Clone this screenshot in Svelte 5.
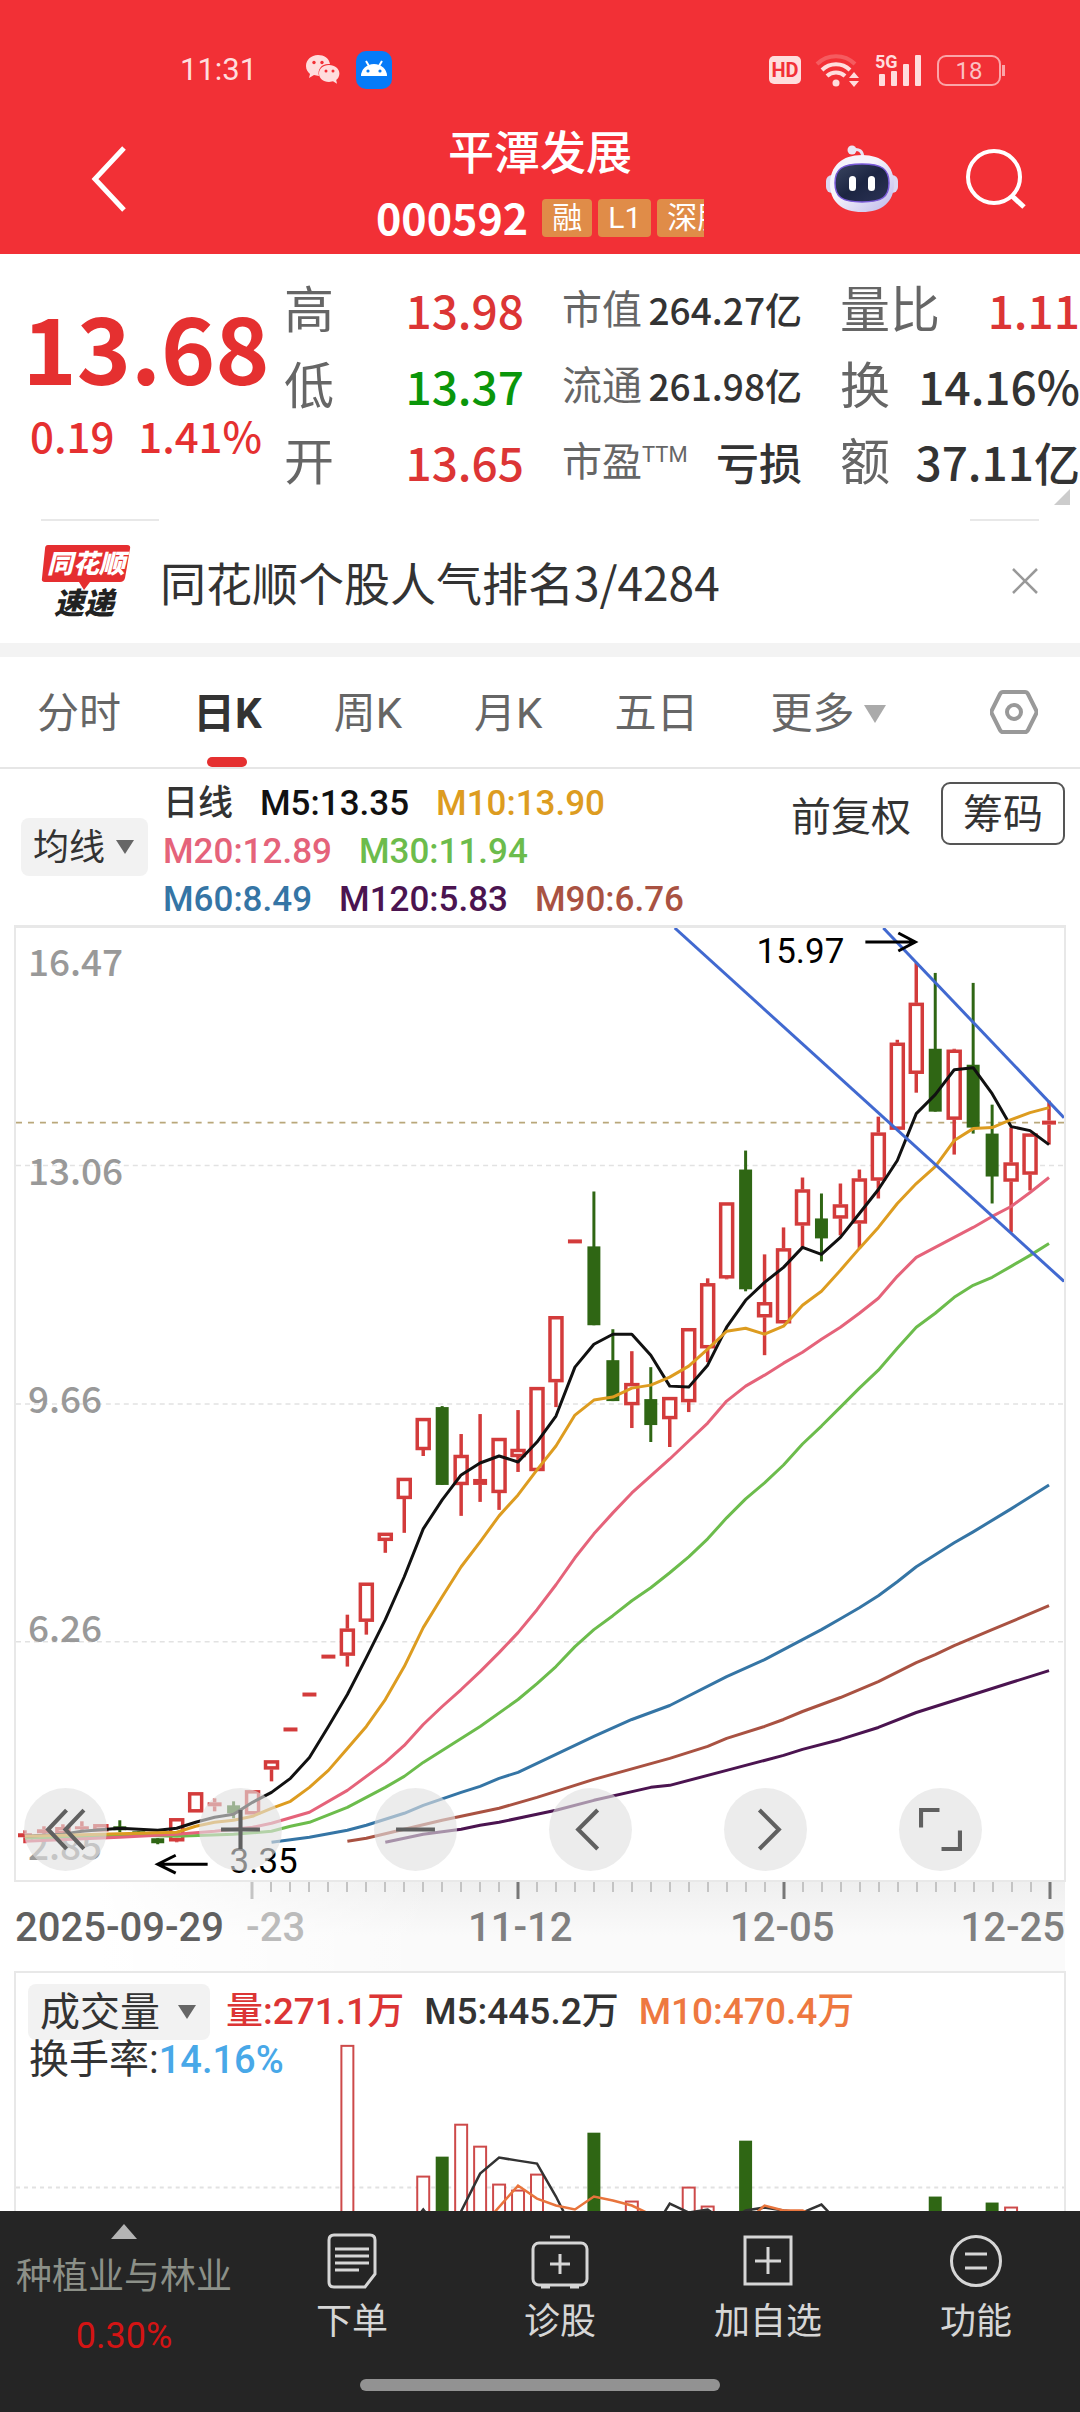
<script>

  // Quote figures, one array per column
  const quotes = [
    [
      { label: '高', value: '13.98', tone: 'up' },
      { label: '低', value: '13.37', tone: 'down' },
      { label: '开', value: '13.65', tone: 'up' }
    ],
    [
      { label: '市值', value: '264.27亿', size: 'small' },
      { label: '流通', value: '261.98亿', size: 'small' },
      { label: '市盈', sup: 'TTM', value: '亏损', size: 'medium' }
    ],
    [
      { label: '量比', value: '1.11', tone: 'up' },
      { label: '换', value: '14.16%' },
      { label: '额', value: '37.11亿' }
    ]
  ];

  const tabs = ['分时', '日K', '周K', '月K', '五日'];
  let activeTab = '日K';

  const legend = [
    [['日线', '#333'], ['M5:13.35', '#111'], ['M10:13.90', '#dd9c20']],
    [['M20:12.89', '#e5637a'], ['M30:11.94', '#6cbc4c']],
    [['M60:8.49', '#3575a5'], ['M120:5.83', '#4b1450'], ['M90:6.76', '#a95242']]
  ];

  // Horizontal position of the trading day with index i
  const x = (i) => 9 + 19 * i;

  // Candles: [high, body top, body bottom, low, green]
  const candles = [
    [904, 907, 911, 917], [900, 903, 907, 910], [898, 901, 908, 909], [895, 900, 903, 906],
    [898, 898, 905, 905], [894, 900, 904, 906, 1], [905, 905, 908, 908, 1], [912, 912, 917, 918, 1],
    [892, 892, 915, 916], [866, 866, 886, 886], [872, 876, 880, 885], [875, 879, 887, 892, 1],
    [864, 864, 888, 888], [834, 834, 843, 855], [801, 801, 805, 805], [766, 766, 770, 770],
    [728, 728, 732, 732], [688, 702, 729, 740], [656, 656, 695, 708], [606, 606, 614, 626],
    [551, 551, 572, 606], [491, 491, 523, 529], [479, 480, 558, 558, 1], [507, 528, 558, 589],
    [487, 552, 558, 575], [511, 511, 566, 583], [483, 522, 530, 545], [460, 460, 544, 544],
    [389, 389, 455, 480], [312, 312, 316, 316], [264, 319, 398, 398, 1], [402, 433, 474, 474, 1],
    [424, 456, 478, 501], [440, 472, 498, 515, 1], [470, 470, 492, 520], [401, 401, 475, 485],
    [351, 356, 421, 435], [275, 275, 351, 352], [223, 242, 362, 364, 1], [327, 375, 390, 428],
    [300, 321, 396, 396], [250, 262, 298, 320], [266, 291, 311, 334, 1], [256, 277, 291, 308],
    [242, 251, 296, 321], [189, 205, 253, 271], [112, 115, 202, 202], [35, 75, 146, 165],
    [45, 121, 184, 184, 1], [121, 122, 192, 227], [55, 137, 200, 206, 1], [177, 206, 249, 276, 1],
    [200, 235, 254, 305], [206, 206, 247, 263], [173, 193, 197, 217]
  ];

  // Moving averages: [day index, y, day index, y, ...]
  const averages = [
    { color: '#4b1450', points: [19, 916, 21, 908, 23, 903, 24, 899, 25, 896, 27, 888, 28, 884, 30, 874, 33, 861, 34, 859, 37, 844, 40, 829, 41, 823, 43, 813, 45, 801, 47, 786, 50, 768, 52, 756, 54, 744] },
    { color: '#a95242', points: [17, 915, 18, 912, 20, 903, 22, 894, 24, 886, 25, 882, 27, 871, 28, 865, 30, 853, 34, 832, 36, 820, 37, 812, 39, 800, 40, 793, 41, 785, 43, 771, 45, 755, 47, 736, 48, 728, 49, 719, 51, 703, 54, 679] },
    { color: '#3575a5', points: [13, 916, 15, 911, 17, 904, 18, 899, 20, 887, 21, 879, 23, 866, 24, 860, 25, 852, 26, 846, 27, 837, 28, 828, 30, 810, 32, 793, 34, 779, 37, 750, 39, 733, 42, 703, 43, 692, 44, 681, 45, 669, 46, 655, 47, 640, 48, 628, 49, 616, 50, 605, 52, 582, 54, 558] },
    { color: '#6cbc4c', points: [0, 912, 6, 909, 8, 910, 11, 908, 13, 905, 14, 900, 15, 896, 17, 881, 19, 861, 20, 850, 21, 836, 23, 812, 24, 800, 26, 773, 27, 757, 28, 740, 29, 720, 30, 703, 31, 689, 32, 674, 33, 661, 34, 646, 35, 630, 36, 612, 37, 591, 38, 572, 39, 556, 40, 538, 41, 517, 42, 499, 43, 480, 44, 461, 45, 443, 46, 421, 47, 400, 48, 386, 49, 370, 50, 358, 51, 350, 52, 339, 53, 328, 54, 316] },
    { color: '#e5637a', points: [0, 915, 5, 911, 8, 908, 10, 905, 12, 901, 13, 897, 15, 886, 17, 864, 19, 836, 20, 819, 21, 798, 22, 780, 23, 763, 24, 745, 25, 726, 26, 706, 27, 683, 28, 658, 29, 631, 30, 607, 31, 586, 32, 566, 33, 549, 34, 532, 35, 514, 36, 496, 37, 474, 38, 459, 39, 448, 40, 436, 41, 425, 42, 412, 43, 400, 44, 386, 45, 371, 46, 349, 47, 330, 48, 320, 49, 310, 50, 300, 51, 289, 52, 279, 53, 265, 54, 250] },
    { color: '#111', points: [0, 910, 2, 908, 3, 905, 5, 902, 6, 903, 7, 904, 8, 902, 9, 896, 10, 891, 11, 888, 12, 876, 13, 866, 14, 852, 15, 831, 16, 800, 17, 768, 18, 731, 19, 693, 20, 650, 21, 602, 22, 573, 23, 548, 24, 536, 25, 529, 26, 535, 27, 515, 28, 489, 29, 440, 30, 417, 31, 407, 32, 407, 33, 428, 34, 459, 35, 460, 36, 438, 37, 400, 38, 373, 39, 355, 40, 340, 41, 320, 42, 327, 43, 310, 44, 286, 45, 262, 46, 233, 47, 186, 48, 167, 49, 142, 50, 140, 51, 166, 52, 199, 53, 203, 54, 217] },
    { color: '#dd9c20', points: [0, 910, 4, 908, 8, 906, 9, 900, 10, 896, 11, 894, 12, 890, 13, 882, 14, 875, 15, 861, 16, 844, 17, 822, 18, 800, 19, 773, 20, 740, 21, 701, 22, 670, 23, 640, 24, 615, 25, 589, 26, 568, 27, 543, 28, 519, 29, 488, 30, 473, 31, 470, 32, 461, 33, 458, 34, 450, 35, 439, 36, 422, 37, 404, 38, 401, 39, 407, 40, 399, 41, 378, 42, 364, 43, 343, 44, 321, 45, 300, 46, 276, 47, 256, 48, 239, 49, 213, 50, 201, 51, 200, 52, 192, 53, 185, 54, 180] }
  ];

  const priceLabels = [['16.47', 48], ['13.06', 257], ['9.66', 486], ['6.26', 715], ['2.85', 934]];

  // Volume bars: [day index, top, green]
  const volumes = [
    [17, 72], [21, 203], [22, 184, 1], [23, 151], [24, 173], [25, 211], [26, 217], [27, 201],
    [30, 160, 1], [32, 228], [35, 214], [36, 233], [38, 168, 1], [48, 224, 1], [51, 230, 1], [52, 234]
  ];
  const volumeAverages = [
    { color: '#333', points: [20.7, 244, 21, 237, 21.3, 244, 22.7, 250, 24, 201, 25, 185, 26, 188, 27, 191, 28, 224, 29, 262, 33, 262, 34, 231, 35, 240, 36, 237, 37, 250, 38, 238, 39, 235, 40, 238, 41, 240, 42, 232, 43, 252] },
    { color: '#e8743c', points: [24, 256, 26, 213, 27, 226, 28, 233, 29, 237, 30, 224, 31, 228, 32, 233, 33, 242, 34, 262, 38, 250, 39, 233, 40, 238, 41, 238, 42, 246] }
  ];

  const ticks = Array.from({ length: 43 }, (_, n) => n + 12);

  function toPoints(list) {
    let out = '';
    for (let n = 0; n < list.length; n += 2) out += `${x(list[n])},${list[n + 1]} `;
    return out;
  }

</script>

<div class="page">
  <header>
    <div class="status">
      <span class="clock">11:31</span>
      <svg class="wechat" viewBox="0 0 34 30" width="34" height="30">
        <path fill="#fdd" d="M12 0C5 0 0 5 0 11c0 4 2 6 4 8l-1 4 5-3 5 1C11 14 16 8 24 9 23 3 18 0 12 0Z" />
        <path fill="#fdd" d="M23 10c-6 0-10 4-10 8.500s4 8.500 10 8.500l4-.7 4 2.500-.8-3.800c2-1.500 3.200-4 3.200-6.500 0-4.500-4.400-8.500-10.400-8.500Z" />
        <g fill="#f23036"><circle cx="8" cy="7.500" r="1.700" /><circle cx="16" cy="7.500" r="1.700" /><circle cx="20" cy="16" r="1.500" /><circle cx="27" cy="16" r="1.500" /></g>
      </svg>
      <svg viewBox="0 0 36 38" width="36" height="38">
        <rect width="36" height="38" rx="10" fill="#067bf8" />
        <path d="M5 25a13 12 0 0 1 26 0Z" fill="#fff" />
        <path d="m13 15-3-5M23 15l3-5" stroke="#fff" stroke-width="2" />
        <g fill="#067bf8"><circle cx="12" cy="20" r="1.600" /><circle cx="24" cy="20" r="1.600" /></g>
      </svg>
      <div class="signals">
        <span class="hd">HD</span>
        <svg viewBox="0 0 46 34" width="46" height="34" fill="none" stroke="#fdd" stroke-width="4">
          <path d="M2 11a27 27 0 0 1 38 0" opacity=".25" />
          <path d="M7 17a20 20 0 0 1 28 0M12 23a13 13 0 0 1 18 0" />
          <circle cx="21" cy="30" r="3.500" fill="#fdd" stroke="none" />
          <path d="m34 25 5-6 5 6ZM34 28l5 6 5-6Z" fill="#fdd" stroke="none" />
        </svg>
        <svg class="cell" viewBox="0 0 48 34" width="48" height="34" fill="#fdd">
          <text x="0" y="15">5G</text>
          <rect x="4" y="21" width="6" height="12" rx="1" /><rect x="16" y="18" width="6" height="15" rx="1" />
          <rect x="28" y="11" width="6" height="22" rx="1" /><rect x="40" y="2" width="6" height="31" rx="1" />
        </svg>
        <span class="battery">18</span>
      </div>
    </div>
    <div class="titlebar">
      <button class="bare back" aria-label="返回">
        <svg viewBox="0 0 36 66" width="36" height="66" fill="none" stroke="#fff" stroke-width="5"><path d="M33 2 4 33l29 31" /></svg>
      </button>
      <div class="title">
        <h1>平潭发展</h1>
        <div class="code">
          <span class="num">000592</span>
          <div class="tags"><span class="tag">融</span><span class="tag">L1</span><span class="tag">深股</span></div>
        </div>
      </div>
      <div class="actions">
        <button class="bare" aria-label="智能助手">
          <svg viewBox="0 0 72 68" width="72" height="68">
            <defs>
              <linearGradient id="shell" x1="0" y1="0" x2="1" y2="1"><stop offset=".4" stop-color="#f6f4fb" /><stop offset="1" stop-color="#bcb6ea" /></linearGradient>
              <linearGradient id="visor" x1="0" y1="0" x2="1" y2="1"><stop offset="0" stop-color="#3a4560" /><stop offset=".5" stop-color="#1c2542" /><stop offset="1" stop-color="#2c3356" /></linearGradient>
            </defs>
            <path d="M26 5c7-2 11 1 11 9" fill="none" stroke="#e9e4f4" stroke-width="3" />
            <circle cx="26" cy="5" r="4.500" fill="#ece6f4" />
            <rect x="0" y="30" width="72" height="18" rx="6" fill="#dcd8f2" />
            <path d="M36 10c20 0 32 11 32 29S56 67 36 67 4 57 4 39s12-29 32-29Z" fill="url(#shell)" />
            <path d="M36 19c20 0 27 5 27 19s-7 19-27 19S9 52 9 38s7-19 27-19Z" fill="url(#visor)" stroke="#7a5ad8" stroke-width="1.500" />
            <rect x="23" y="31" width="7" height="15" rx="3.500" fill="#fff" /><rect x="42" y="31" width="7" height="15" rx="3.500" fill="#fff" />
          </svg>
        </button>
        <button class="bare" aria-label="搜索">
          <svg viewBox="0 0 60 60" width="60" height="60" fill="none" stroke="#fff" stroke-width="4"><circle cx="28" cy="28" r="26" /><path d="m46 47 12 11" stroke-width="5" /></svg>
        </button>
      </div>
    </div>
  </header>

  <section class="quote">
    <div class="price">
      <strong>13.68</strong>
      <div class="change"><span>0.19</span><span>1.41%</span></div>
    </div>
    {#each quotes as column}
      <dl>
        {#each column as row}
          <div class="figure {row.size || ''}">
            <dt>{row.label}{#if row.sup}<sup>{row.sup}</sup>{/if}</dt>
            <dd class={row.tone || ''}>{row.value}</dd>
          </div>
        {/each}
      </dl>
    {/each}
    <i class="corner"></i>
  </section>

  <section class="news">
    <svg class="news-logo" viewBox="0 0 90 76" width="90" height="76">
      <path d="M7 2h79q4 0 3 4l-5 29q-1 4-5 4H49l-6 8-5-8H4q-4 0-3-4L4 6q0-4 3-4Z" fill="#e52e30" />
      <text x="45" y="30" class="logo-top" text-anchor="middle">同花顺</text>
      <text x="43" y="71" class="logo-bottom" text-anchor="middle">速递</text>
    </svg>
    <a href="#rank">同花顺个股人气排名3/4284</a>
    <button class="bare" aria-label="关闭">
      <svg viewBox="0 0 26 26" width="26" height="26" stroke="#999" stroke-width="2.500"><path d="m1 1 24 24M25 1 1 25" /></svg>
    </button>
  </section>

  <nav class="tabs">
    {#each tabs as tab}
      <button class="bare tab" class:active={tab === activeTab} on:click={() => (activeTab = tab)}>{tab}</button>
    {/each}
    <button class="bare tab more">更多<i class="caret pale"></i></button>
    <button class="bare settings" aria-label="设置">
      <svg viewBox="0 0 48 48" width="48" height="48" fill="none" stroke="#999" stroke-width="4"><path d="M13 4h22q2 0 3 2l8 16q1 2 0 4l-8 16q-1 2-3 2H13q-2 0-3-2L2 26q-1-2 0-4l8-16q1-2 3-2Z" /><circle cx="24" cy="24" r="7" /></svg>
    </button>
  </nav>

  <section class="indicators">
    <div class="picker">
      <select aria-label="主图指标"><option>均线</option></select>
      <i class="caret"></i>
    </div>
    <div class="legend">
      {#each legend as line}
        <div>
          {#each line as [text, color]}<span style:color>{text}</span>{/each}
        </div>
      {/each}
    </div>
    <div class="adjust">
      <span>前复权</span>
      <button class="chips">筹码</button>
    </div>
  </section>

  <section class="chart">
    <svg viewBox="0 0 1050 954" class="plot">
      {#each [238, 477, 715] as y}
        <line x1="0" x2="1050" y1={y} y2={y} stroke="#e2e2e2" stroke-width="1.500" stroke-dasharray="5 4" />
      {/each}
      <line x1="0" x2="1050" y1="195" y2="195" stroke="#b9a77a" stroke-width="2" stroke-dasharray="6 6" />
      {#each priceLabels as [text, y]}
        <text class="scale" x="12" {y}>{text}</text>
      {/each}
      {#each candles as [high, top, bottom, low, green], i}
        {#if green}
          <line x1={x(i)} x2={x(i)} y1={high} y2={low} stroke="#2f6614" stroke-width="3" />
          <rect x={x(i) - 6.5} y={top} width="13" height={bottom - top} fill="#2f6614" />
        {:else}
          <line x1={x(i)} x2={x(i)} y1={high} y2={top} stroke="#d33b3b" stroke-width="3.500" />
          <line x1={x(i)} x2={x(i)} y1={bottom} y2={low} stroke="#d33b3b" stroke-width="3.500" />
          {#if bottom - top < 7}
            <rect x={x(i) - 7} y={top} width="14" height={bottom - top} fill="#d33b3b" />
          {:else}
            <rect x={x(i) - 6} y={top + 1.5} width="12" height={bottom - top - 3} fill="#fff" stroke="#d33b3b" stroke-width="3.500" />
          {/if}
        {/if}
      {/each}
      {#each averages as line}
        <polyline points={toPoints(line.points)} fill="none" stroke={line.color} stroke-width="3" stroke-linejoin="round" />
      {/each}
      <g stroke="#4169d0" stroke-width="3"><line x1="660" y1="0" x2="1050" y2="354" /><line x1="869" y1="0" x2="1050" y2="190" /></g>
      <g fill="none" stroke="#000" stroke-width="3"><path d="M851 14h50M884 5l17 9-17 9" /><path d="M192 938h-50M160 929l-18 9 18 9" /></g>
      <text class="mark" x="742" y="35">15.97</text>
      <text class="mark" x="214" y="947">3.35</text>
    </svg>
    <div class="tools">
      <button aria-label="最早"><svg viewBox="0 0 42 42"><path d="M22 2 4 21l18 19M39 2 21 21l18 19" /></svg></button>
      <button aria-label="放大"><svg viewBox="0 0 42 42"><path d="M2 21h38M21 2v38" /></svg></button>
      <button aria-label="缩小"><svg viewBox="0 0 42 42"><path d="M2 21h38" /></svg></button>
      <button aria-label="左移"><svg viewBox="0 0 42 42"><path d="M28 2 9 21l19 19" /></svg></button>
      <button aria-label="右移"><svg viewBox="0 0 42 42"><path d="m15 2 19 19-19 19" /></svg></button>
      <button aria-label="全屏"><svg viewBox="0 0 42 42"><path d="M2 19V2h18M40 22v18H22" /></svg></button>
    </div>
  </section>

  <div class="axis">
    <svg viewBox="0 0 1050 18">
      {#each ticks as i}
        <line x1={x(i)} x2={x(i)} y1="0" y2={(i - 12) % 14 ? 10 : 17} stroke={i > 12 && (i - 12) % 14 === 0 ? '#777' : '#c4c4c4'} stroke-width={(i - 12) % 14 ? 2 : 3} />
      {/each}
    </svg>
    <div class="dates">
      <time class="first">2025-09-29</time><time class="faded">-23</time><time>11-12</time><time>12-05</time><time>12-25</time>
    </div>
  </div>

  <section class="volume">
    <svg viewBox="0 0 1050 240" class="bars">
      <line x1="0" x2="1050" y1="215" y2="215" stroke="#e2e2e2" stroke-width="2" stroke-dasharray="4 4" />
      {#each volumes as [i, top, green]}
        {#if green}
          <rect x={x(i) - 6.5} y={top} width="13" height={260 - top} fill="#2f6614" />
        {:else}
          <rect x={x(i) - 6} y={top + 1} width="12" height={260 - top} fill="#fff" stroke="#cd4a4a" stroke-width="2" />
        {/if}
      {/each}
      {#each volumeAverages as line}
        <polyline points={toPoints(line.points)} fill="none" stroke={line.color} stroke-width="2.500" />
      {/each}
    </svg>
    <div class="volume-head">
      <div class="picker wide">
        <select aria-label="副图指标"><option>成交量</option></select>
        <i class="caret"></i>
      </div>
      <span class="up">量:271.1万</span>
      <span>M5:445.2万</span>
      <span class="orange">M10:470.4万</span>
    </div>
    <div class="turnover">换手率:<span>14.16%</span></div>
  </section>

  <footer>
    <div class="dock">
      <button class="bare sector">
        <i></i>
        <span>种植业与林业</span>
        <em>0.30%</em>
      </button>
      <button class="bare item">
        <svg viewBox="0 0 58 56"><path d="M11 2h36q5 0 5 5v34L42 54H11q-5 0-5-5V7q0-5 5-5Z" /><path d="M12 16h34M12 23h34M12 30h34M12 37h24" /></svg>下单
      </button>
      <button class="bare item">
        <svg viewBox="0 0 58 56"><rect x="2" y="10" width="54" height="42" rx="6" /><path d="M19 4h20M29 21v20M19 31h20M10 54h9M39 54h9" /></svg>诊股
      </button>
      <button class="bare item">
        <svg viewBox="0 0 58 56"><rect x="6" y="4" width="46" height="47" /><path d="M29 14v27M16 28h26" /></svg>加自选
      </button>
      <button class="bare item">
        <svg viewBox="0 0 58 56"><circle cx="29" cy="28" r="24.500" /><path d="M18 21h22M18 35h22" /></svg>功能
      </button>
    </div>
    <div class="home"></div>
  </footer>
</div>

<style>

  :global(body) {
    margin: 0;
    background: #fff;
  }

  .page {
    --num: "Noto Sans CJK SC", sans-serif;
    display: flex;
    flex-direction: column;
    height: 100vh;
    overflow: hidden;
    color: #333;
    font-family: Roboto, "Noto Sans CJK SC", sans-serif;
    font-size: 40px;
    line-height: 48px;
    white-space: nowrap;
  }
  .bare {
    padding: 0;
    border: 0;
    background: none;
    color: inherit;
    font: inherit;
  }
  button svg {
    display: block;
  }
  .up {
    color: #dc3535;
  }
  .down {
    color: #0a960a;
  }

  /* Header */
  header {
    display: flex;
    flex-direction: column;
    height: 254px;
    background: #f23036;
    color: #fff;
  }
  .status {
    display: flex;
    align-items: center;
    gap: 16px;
    margin-top: 46px;
    padding: 0 79px 0 180px;
    color: #fdd;
  }
  .clock {
    width: 110px;
    font-size: 31px;
  }
  .signals {
    display: flex;
    align-items: center;
    gap: 14px;
    margin-left: auto;
  }
  .hd {
    width: 32px;
    height: 28px;
    border-radius: 5px;
    background: #fdd;
    color: #f23036;
    font-size: 20px;
    font-weight: bold;
    line-height: 28px;
    text-align: center;
  }
  .cell {
    overflow: visible;
    font-size: 18px;
    font-weight: bold;
  }
  .battery {
    position: relative;
    width: 60px;
    height: 27px;
    border: 2px solid #fba5a8;
    border-radius: 9px;
    color: #fbc0c2;
    font-size: 24px;
    line-height: 28px;
    text-align: center;
  }
  .battery::after {
    content: "";
    position: absolute;
    top: 8px;
    right: -6px;
    width: 3px;
    height: 11px;
    background: #fba5a8;
  }
  .titlebar {
    display: grid;
    grid-template-columns: 1fr auto 1fr;
    align-items: center;
    padding: 28px 54px 0;
  }
  .back {
    justify-self: start;
    margin: 0 0 16px 37px;
  }
  .title {
    width: 328px;
  }
  h1 {
    margin: 0;
    font-size: 46px;
    font-weight: 500;
    line-height: 62px;
    text-align: center;
  }
  .code {
    display: flex;
    align-items: center;
    gap: 14px;
    height: 68px;
  }
  .num {
    padding-bottom: 4px;
    font: bold 43px/48px var(--num);
  }
  .tags {
    display: flex;
    flex: 1;
    gap: 6px;
    overflow: hidden;
  }
  .tag {
    flex: none;
    padding: 0 10px;
    border-radius: 4px;
    background: #e08c48;
    font-size: 30px;
    line-height: 38px;
  }
  .actions {
    display: flex;
    align-items: center;
    gap: 68px;
    justify-self: end;
    margin-bottom: 16px;
  }

  /* Quote */
  .quote {
    position: relative;
    display: flex;
    padding: 19px 0 18px 30px;
  }
  .price {
    display: flex;
    flex-direction: column;
    align-items: center;
    width: 232px;
    margin-right: 22px;
    color: #e53030;
    font-family: var(--num);
  }
  .price strong {
    margin-top: 22px;
    font-size: 92px;
    font-weight: 700;
    line-height: 100px;
  }
  .change {
    display: flex;
    align-items: center;
    justify-content: space-between;
    width: 100%;
    margin-top: 16px;
    font-size: 42px;
    font-weight: 500;
  }
  dl {
    width: 240px;
    margin: 0 38px 0 0;
  }
  dl:last-of-type {
    flex: 1;
    margin: 0;
  }
  .figure {
    display: flex;
    align-items: center;
    justify-content: space-between;
    height: 76px;
  }
  dt {
    color: #666;
    font-size: 50px;
  }
  .small dt, .medium dt {
    font-size: 40px;
  }
  sup {
    font-size: 22px;
    line-height: 22px;
    vertical-align: 14px;
  }
  dd {
    margin: 0;
    padding-bottom: 5px;
    font: 500 46px/60px var(--num);
  }
  .small dd {
    font-size: 37px;
  }
  .medium dd {
    font-size: 43px;
  }
  .corner {
    position: absolute;
    right: 10px;
    bottom: 14px;
    border: 8px solid #ccc;
    border-top-color: transparent;
    border-left-color: transparent;
  }

  /* News */
  .news {
    display: flex;
    align-items: center;
    height: 124px;
    padding: 0 42px 0 41px;
    border-bottom: 14px solid #f3f3f3;
    background: linear-gradient(#e8e8e8, #e8e8e8) 41px 0 / 118px 2px no-repeat,
      linear-gradient(#e8e8e8, #e8e8e8) right 41px top 0 / 69px 2px no-repeat;
  }
  .news-logo {
    overflow: visible;
  }
  .logo-top {
    fill: #fff;
    font: italic 900 26px "Noto Sans CJK SC", sans-serif;
  }
  .logo-bottom {
    fill: #222;
    font: italic 900 30px "Noto Sans CJK SC", sans-serif;
  }
  .news a {
    flex: 1;
    margin-left: 29px;
    color: #333;
    font-family: "Noto Sans CJK SC", sans-serif;
    font-size: 46px;
    text-decoration: none;
  }

  /* Tabs */
  .tabs {
    display: flex;
    gap: 72px;
    height: 110px;
    padding: 0 42px 0 37px;
    border-bottom: 2px solid #e6e6e6;
    color: #666;
    font-size: 42px;
  }
  .tab {
    position: relative;
    padding-top: 4px;
  }
  .active {
    color: #333;
    font-weight: bold;
  }
  .active::after {
    content: "";
    position: absolute;
    bottom: 0;
    left: 50%;
    width: 40px;
    height: 10px;
    margin-left: -20px;
    border-radius: 5px;
    background: #e53030;
  }
  .more {
    display: flex;
    align-items: center;
    gap: 10px;
  }
  .caret {
    border: 9px solid transparent;
    border-top: 14px solid #666;
    border-bottom: 0;
  }
  .pale {
    border-width: 18px 11px 0;
    border-top-color: #aaa;
  }
  .settings {
    margin-left: auto;
  }

  /* Indicator row */
  .indicators {
    display: flex;
    align-items: center;
    height: 156px;
    padding: 0 15px 0 21px;
  }
  .picker {
    position: relative;
    display: flex;
    align-items: center;
    width: 127px;
  }
  .picker select {
    width: 100%;
    height: 58px;
    padding: 2px 0 0 12px;
    border: 0;
    border-radius: 8px;
    background: #f2f2f2;
    color: #333;
    font: inherit;
    font-size: 36px;
    appearance: none;
  }
  .picker .caret {
    position: absolute;
    right: 14px;
    pointer-events: none;
  }
  .legend {
    flex: 1;
    margin-left: 15px;
    padding-top: 10px;
    font-size: 35px;
    font-weight: 500;
  }
  .legend div {
    display: flex;
    gap: 27px;
  }
  .adjust {
    display: flex;
    align-items: center;
    gap: 30px;
    align-self: flex-start;
    margin-top: 13px;
  }
  .adjust span {
    padding-top: 8px;
  }
  .chips {
    height: 63px;
    padding: 2px 20px 0;
    border: 2px solid #555;
    border-radius: 9px;
    background: #fff;
    color: #333;
    font: inherit;
  }

  /* Chart */
  .chart {
    position: relative;
    margin: 0 14px;
    border: 2px solid #e8e8e8;
    border-top-width: 3px;
  }
  .plot {
    display: block;
    width: 100%;
  }
  .scale {
    fill: #999;
    font: 500 37px var(--num);
  }
  .mark {
    font-size: 35px;
  }
  .tools {
    position: absolute;
    right: 82px;
    bottom: 9px;
    left: 8px;
    display: flex;
    justify-content: space-between;
  }
  .tools button {
    width: 83px;
    height: 83px;
    padding: 20px;
    border: 0;
    border-radius: 50%;
    background: rgba(224, 224, 224, 0.62);
  }
  .tools svg {
    fill: none;
    stroke: #606060;
    stroke-width: 4;
  }

  /* Date axis */
  .axis {
    height: 89px;
    margin: 0 15px;
    background: linear-gradient(90deg, #fff 8%, transparent 40%), linear-gradient(#efefef, #fafafa 60%);
  }
  .axis svg {
    display: block;
  }
  .dates {
    display: flex;
    margin-top: 4px;
    color: #808080;
    font-size: 40px;
    font-weight: 500;
  }
  .dates time:nth-child(3) {
    margin-left: auto;
  }
  .dates time:nth-child(4) {
    margin-left: 15%;
  }
  .dates time:nth-child(5) {
    margin-left: 12%;
  }
  .first {
    color: #606060;
  }
  .faded {
    margin-left: 22px;
    color: #bbb;
  }

  /* Volume */
  .volume {
    position: relative;
    flex: 1;
    min-height: 0;
    margin: 0 14px;
    border: 2px solid #e8e8e8;
    border-bottom: 0;
    overflow: hidden;
  }
  .bars {
    position: absolute;
    top: 0;
    left: 0;
    width: 100%;
    overflow: visible;
  }
  .volume-head {
    position: relative;
    display: flex;
    align-items: center;
    gap: 20px;
    padding: 11px 0 0 12px;
    font-size: 37px;
    font-weight: 500;
  }
  .wide {
    width: 182px;
    margin-right: -4px;
    font-weight: 400;
  }
  .wide select {
    height: 56px;
    font-size: 40px;
  }
  .orange {
    color: #ee7840;
  }
  .turnover {
    position: relative;
    padding-left: 13px;
    line-height: 40px;
  }
  .turnover span {
    color: #48a8e8;
    font-size: 38px;
    font-weight: 500;
  }

  /* Bottom dock */
  footer {
    height: 201px;
    background: #252525;
    color: #d6d6d6;
    font-size: 36px;
  }
  .dock {
    display: flex;
    height: 168px;
  }
  .sector {
    display: flex;
    flex-direction: column;
    align-items: center;
    width: 248px;
    padding-top: 13px;
    color: #8c9088;
  }
  .sector i {
    border: 13px solid transparent;
    border-top: 0;
    border-bottom: 15px solid #b4b4b4;
  }
  .sector span {
    margin: 14px 0 11px;
  }
  .sector em {
    color: #d41414;
    font-style: normal;
  }
  .item {
    display: flex;
    flex: 1;
    flex-direction: column;
    align-items: center;
    gap: 9px;
    padding-top: 22px;
  }
  .item svg {
    width: 58px;
    height: 56px;
    fill: none;
    stroke: #d6d6d6;
    stroke-width: 3;
  }
  .home {
    width: 360px;
    height: 12px;
    margin: 0 auto;
    border-radius: 6px;
    background: #929292;
  }

</style>
